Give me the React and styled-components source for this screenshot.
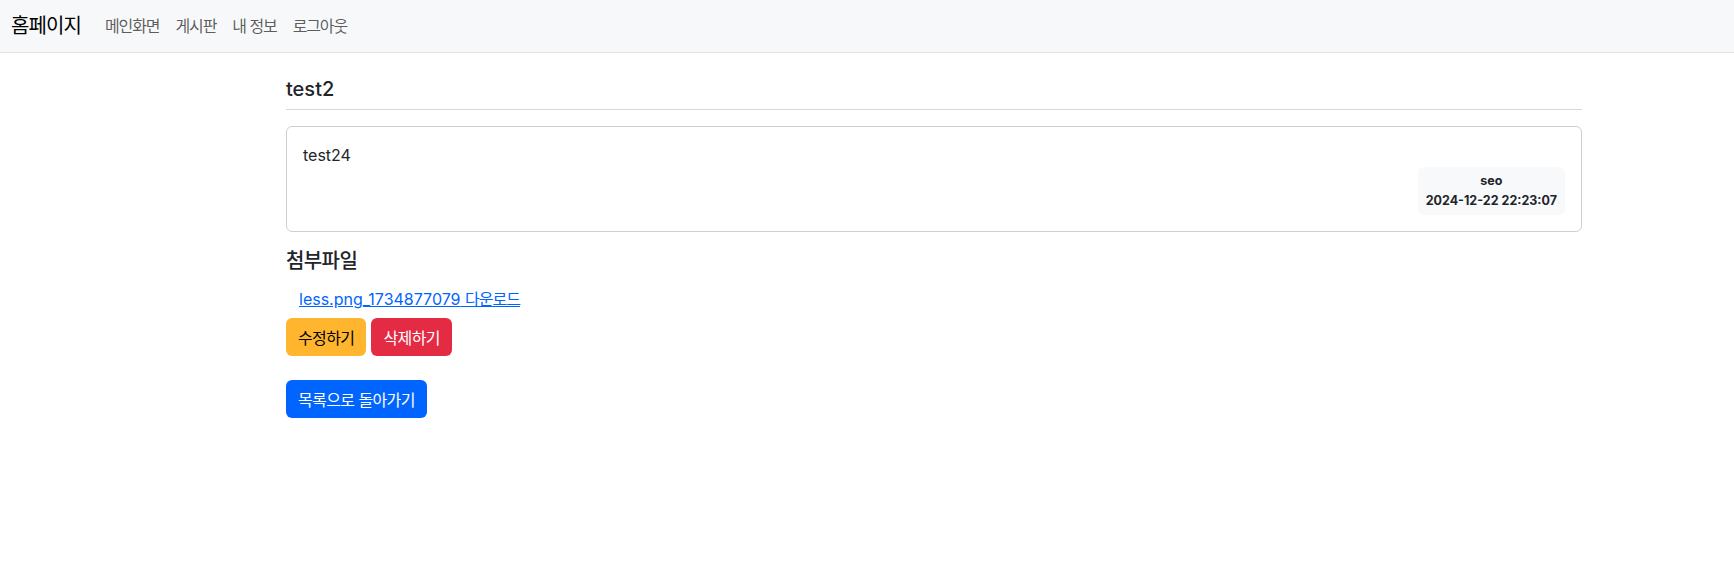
import React from "react";
import styled, { createGlobalStyle } from "styled-components";

const GlobalStyle = createGlobalStyle`
  body {
    margin: 0;
    background: #fff;
    color: #212529;
    font-family: "Inter", "Noto Sans CJK KR", sans-serif;
    font-size: 16px;
    line-height: 1.5;
  }
  * {
    box-sizing: border-box;
  }
`;

const App = () => {
  const post = {
    title: "test2",
    content: "test24",
    writer: "seo",
    date: "2024-12-22 22:23:07",
    file: "less.png_1734877079",
  };

  return (
    <>
      <GlobalStyle />
      <Navbar>
        <Brand href="#">홈페이지</Brand>
        <NavLinks>
          <NavLink href="#">메인화면</NavLink>
          <NavLink href="#">게시판</NavLink>
          <NavLink href="#">내 정보</NavLink>
          <NavLink href="#">로그아웃</NavLink>
        </NavLinks>
      </Navbar>
      <Main>
        <Title>{post.title}</Title>
        <Card>
          <p>{post.content}</p>
          <Meta>
            <div>{post.writer}</div>
            <div>{post.date}</div>
          </Meta>
        </Card>
        <SubTitle>첨부파일</SubTitle>
        <FileList>
          <li>
            <a href="#">
              {post.file} <Hangul>다운로드</Hangul>
            </a>
          </li>
        </FileList>
        <ButtonRow>
          <Button $bg="#ffb52e" $color="#000">
            수정하기
          </Button>
          <Button $bg="#e32b44" $color="#fff">
            삭제하기
          </Button>
        </ButtonRow>
        <ButtonRow $top="24px">
          <Button $bg="#0065ff" $color="#fff">
            목록으로 돌아가기
          </Button>
        </ButtonRow>
      </Main>
    </>
  );
};

const Navbar = styled.nav`
  display: flex;
  align-items: center;
  height: 53px;
  padding: 0 11px;
  background-color: #f7f8f9;
  border-bottom: 1px solid #dee2e6;
`;

const Brand = styled.a`
  font-size: 20px;
  letter-spacing: -0.9px;
  color: #000;
  text-decoration: none;
  margin-right: 16px;
`;

const NavLinks = styled.div`
  display: flex;
  align-items: center;
`;

const NavLink = styled.a`
  padding: 8px;
  font-size: 16px;
  letter-spacing: -1.1px;
  color: rgba(0, 0, 0, 0.65);
  text-decoration: none;
`;

const Main = styled.main`
  width: 1296px;
  margin-left: 286px;
  padding-top: 24px;
`;

const Title = styled.h5`
  margin: 0;
  padding-bottom: 8px;
  font-size: 20px;
  font-weight: 500;
  line-height: 1.2;
  border-bottom: 1px solid #d8d8d8;
`;

const Card = styled.div`
  margin-top: 16px;
  padding: 16px;
  border: 1px solid #cfcfcf;
  border-radius: 6px;
  display: flex;
  flex-direction: column;

  p {
    margin: 0;
  }
`;

const Meta = styled.div`
  align-self: flex-end;
  padding: 4px 8px;
  background-color: #f8f9fa;
  border-radius: 6px;
  font-size: 12.5px;
  line-height: 20px;
  font-weight: 700;
  text-align: center;
`;

const SubTitle = styled.h5`
  margin: 17px 0 0;
  font-size: 20px;
  font-weight: 500;
  line-height: 1.2;
  letter-spacing: -0.6px;
`;

const FileList = styled.ul`
  list-style: none;
  margin: 14px 0 0;
  padding: 0 0 0 13px;

  a {
    color: #0065ff;
  }
`;

const Hangul = styled.span`
  letter-spacing: -1px;
`;

const ButtonRow = styled.div`
  display: flex;
  gap: 5px;
  margin-top: ${(props) => props.$top || "7px"};
`;

const Button = styled.button`
  height: 38px;
  padding: 0 12px;
  border: none;
  border-radius: 6px;
  background-color: ${(props) => props.$bg};
  color: ${(props) => props.$color};
  font-family: inherit;
  font-size: 16px;
  letter-spacing: -0.6px;
  cursor: pointer;
`;

export default App;
